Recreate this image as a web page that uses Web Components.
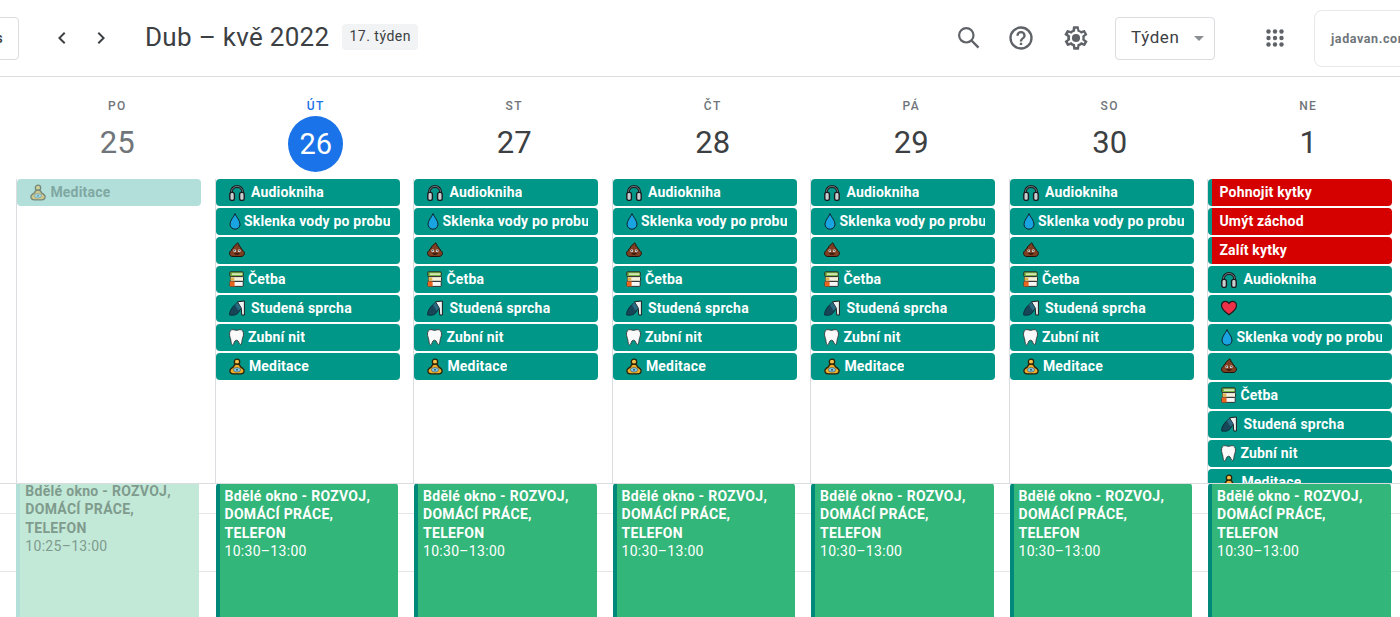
<!DOCTYPE html>
<html lang="cs">
<head>
<meta charset="utf-8">
<title>Kalendář</title>
<style>
  html, body { margin: 0; padding: 0; background: #fff; overflow: hidden; }
  body { font-family: Roboto, "Liberation Sans", sans-serif; }
</style>
</head>
<body>
<cal-app></cal-app>
<script>
const EMOJI = {
  headphones: `<path d="M2.4 11V8a5.6 5.6 0 0 1 11.2 0v3" fill="none" stroke="#1a1d20" stroke-width="3"/><path d="M2.4 10V8a5.6 5.6 0 0 1 11.2 0v2" fill="none" stroke="#7f8b90" stroke-width=".8"/><rect x=".8" y="8.4" width="4.6" height="8" rx="2" fill="#c9ced1" stroke="#1a1d20" stroke-width="1.4"/><rect x="10.6" y="8.4" width="4.6" height="8" rx="2" fill="#c9ced1" stroke="#1a1d20" stroke-width="1.4"/>`,
  drop: `<path d="M6 .6C4.8 4 1 7.4 1 11.2a5 5 0 0 0 10 0C11 7.4 7.2 4 6 .6z" fill="#19a3e0" stroke="#10242c" stroke-width="1"/>`,
  poop: `<path d="M8.8.8c1 1.1 1.3 2 1 3 1.3.3 2 1.2 1.9 2.4 1.1.4 1.7 1.2 1.7 2.2 1.2.5 2 1.6 2 2.9 0 2-1.500 3.200-3.500 3.200H3.900c-2 0-3.400-1.200-3.400-3.200 0-1.300.8-2.400 1.900-2.900 0-1 .7-1.900 1.800-2.300C4.300 4 6.600 3 8.800.8z" fill="#7e3f22" stroke="#241008" stroke-width="1"/><circle cx="5.800" cy="8.800" r="1.400" fill="#fff"/><circle cx="10.200" cy="8.800" r="1.400" fill="#fff"/><circle cx="5.800" cy="8.800" r=".7" fill="#222"/><circle cx="10.200" cy="8.800" r=".7" fill="#222"/><path d="M5 11.300h6c-.7 1.800-5.300 1.800-6 0z" fill="#241008"/>`,
  books: `<rect x=".8" y=".8" width="13.4" height="4.8" rx=".8" fill="#7cb342" stroke="#222" stroke-width=".9"/><rect x="3" y="2.3" width="10.5" height="1.6" fill="#dcedc8"/><rect x="1.5" y="5.6" width="13" height="4.8" rx=".8" fill="#f5f1dc" stroke="#222" stroke-width=".9"/><rect x="1.5" y="6.5" width="3.8" height="3" fill="#e0b24a"/><rect x=".8" y="10.4" width="13.4" height="5" rx=".8" fill="#f7f7f7" stroke="#222" stroke-width=".9"/><rect x=".8" y="10.4" width="4.8" height="5" fill="#e8651f"/>`,
  shower: `<path d="M.5 14.800c0-4 2.400-7.300 5.500-10.300l3-2.500 3.200 6-2.700 4.500c-1.500 2-3.500 2.700-5.500 2.700H2c-1 0-1.500-.1-1.500-.4z" fill="#174659" stroke="#0c2530" stroke-width=".8"/><path d="M8.500 1.800 15.400 1v14h-2.600L12.200 8z" fill="#eef1f2" stroke="#1c1c1c" stroke-width="1"/><path d="M8.500 2.200 12.200 8l-2.700 2.800L6 5z" fill="#2a6a80"/>`,
  tooth: `<path d="M4 .6c1.500 0 2.500.8 3.500.8s2-.8 3.500-.8c2.300 0 3.500 1.900 3.500 4.400 0 2.500-1 3.800-1.300 5.600-.3 2-.5 5-1.900 5-1.500 0-1.100-4.400-3.800-4.400S5.200 16 3.700 16c-1.400 0-1.600-3-1.900-5C1.500 9 .5 7.500.5 5 .5 2.500 1.700.6 4 .6z" fill="#fafafa" stroke="#3a3a3a" stroke-width=".9"/>`,
  meditate: `<circle cx="8" cy="3.800" r="2.700" fill="#f4c04a" stroke="#2b2208" stroke-width="1.300"/><path d="M8 6.200c-2.300 0-3.200 1.200-3.500 2.600C2.700 9.700.9 11 .9 12.800c0 1.800 1.500 3 3.400 3h7.400c1.900 0 3.400-1.200 3.400-3 0-1.800-1.800-3.100-3.600-4-.3-1.400-1.200-2.600-3.500-2.600z" fill="#f0ae2c" stroke="#2b2208" stroke-width="1.300"/><ellipse cx="8" cy="11.800" rx="3.600" ry="2.300" fill="#7fc8ec" stroke="#4b4a2a" stroke-width=".6"/><circle cx="8" cy="11.800" r="1" fill="#2c5a78"/>`,
  heart: `<path d="M8 14.800C3.500 11.600.5 9 .5 5.500.5 3 2.400 1.300 4.500 1.300c1.500 0 2.700.8 3.500 2 .8-1.200 2-2 3.500-2 2.100 0 4 1.700 4 4.200 0 3.500-3 6.100-7.500 9.300z" fill="#ee3048" stroke="#1c1c1c" stroke-width="1.200"/>`
};

class CalEmoji extends HTMLElement {
  connectedCallback() {
    const w = this.getAttribute("w") || 16;
    this.attachShadow({ mode: "open" }).innerHTML = /*html*/ `
      <style>:host{display:inline-flex;flex:none} svg{display:block}</style>
      <svg width="${w}" height="17" viewBox="0 0 ${w} 17">${EMOJI[this.getAttribute("name")]}</svg>`;
  }
}
customElements.define("cal-emoji", CalEmoji);

class CalChip extends HTMLElement {
  connectedCallback() {
    const emoji = this.getAttribute("emoji");
    const w = this.getAttribute("w") || 16;
    this.attachShadow({ mode: "open" }).innerHTML = /*html*/ `
      <style>${CalChip.styles}</style>
      ${emoji ? `<cal-emoji name="${emoji}" w="${w}"></cal-emoji>` : ""}
      <span class="txt"><slot></slot></span>`;
  }
  static get styles() {
    return /*css*/ `
      :host{
        display:flex;align-items:center;gap:5px;box-sizing:border-box;
        width:184px;height:27px;padding:0 10px 0 13px;border-radius:4px;
        background:#009688;color:#fff;font:700 14px/27px Roboto,sans-serif;letter-spacing:.2px;
        white-space:nowrap;overflow:hidden;flex:none;
      }
      .txt{overflow:hidden;position:relative;top:-.5px}
      :host([red]){
        background:linear-gradient(90deg,#009688 4px,#d50000 4px);
        padding-left:11px;
      }
      :host([faded]){background:#b3dfda;color:#7fa8a2}
      :host([faded]) cal-emoji{opacity:.45}
    `;
  }
}
customElements.define("cal-chip", CalChip);

class CalBlock extends HTMLElement {
  connectedCallback() {
    this.attachShadow({ mode: "open" }).innerHTML = /*html*/ `
      <style>${CalBlock.styles}</style>
      <div class="title"><slot></slot></div>
      <div class="time">${this.getAttribute("time")}</div>`;
  }
  static get styles() {
    return /*css*/ `
      :host{
        display:block;box-sizing:border-box;width:182.5px;height:300px;margin:-1px 0 0 1px;
        padding:4px 12px 0 5px;border-left:4px solid #00897b;border-radius:4px;
        background:#33b679;color:#fff;font:14px/18.3px Roboto,sans-serif;letter-spacing:.3px;
        position:relative;
      }
      .title{font-weight:700}
      :host([faded]){
        width:183px;margin-top:-6px;margin-left:.3px;
        background:#c2e8d7;border-left-color:#b2dfd8;color:#7f9b8d;
      }
    `;
  }
}
customElements.define("cal-block", CalBlock);

class CalDayHead extends HTMLElement {
  connectedCallback() {
    this.attachShadow({ mode: "open" }).innerHTML = /*html*/ `
      <style>${CalDayHead.styles}</style>
      <div class="label">${this.getAttribute("label")}</div>
      <div class="num">${this.getAttribute("num")}</div>`;
  }
  static get styles() {
    return /*css*/ `
      :host{
        display:flex;flex-direction:column;align-items:center;box-sizing:border-box;
        height:102px;padding:21px 0 0 4px;color:#3c4043;
      }
      .label{font:500 12px/16px Roboto,sans-serif;letter-spacing:1.4px;color:#70757a;height:18px}
      .num{
        width:55px;height:56px;border-radius:50%;text-align:center;
        font:400 31px/54px Roboto,sans-serif;
      }
      :host([past]) .num{color:#70757a}
      :host([today]) .label{color:#1a73e8}
      :host([today]) .num{background:#1a73e8;color:#fff;font-size:29px;line-height:56px}
    `;
  }
}
customElements.define("cal-day-head", CalDayHead);

class CalTopbar extends HTMLElement {
  connectedCallback() {
    this.attachShadow({ mode: "open" }).innerHTML = /*html*/ `
      <style>${CalTopbar.styles}</style>
      <div class="today">Dnes</div>
      <svg class="chev" width="24" height="24" viewBox="0 0 24 24"><path d="M15.4 7.4 14 6l-6 6 6 6 1.4-1.4L10.800 12z" fill="#3c4043"/></svg>
      <svg class="chev next" width="24" height="24" viewBox="0 0 24 24"><path d="M8.600 7.400 10 6l6 6-6 6-1.400-1.400L13.200 12z" fill="#3c4043"/></svg>
      <div class="title">Dub – kvě 2022</div>
      <div class="week">17. týden</div>
      <div class="grow"></div>
      <svg class="ic" width="26" height="26" viewBox="0 0 26 26" fill="none" stroke="#5f6368"><circle cx="10.300" cy="10.300" r="7.200" stroke-width="2.200"/><path d="M15.500 15.500 22.500 22.700" stroke-width="2.400"/></svg>
      <svg class="ic help" width="28" height="28" viewBox="0 0 24 24"><path d="M11 18h2v-2h-2zm1-16a10 10 0 1 0 0 20 10 10 0 0 0 0-20zm0 18a8 8 0 1 1 0-16 8 8 0 0 1 0 16zm0-14a4 4 0 0 0-4 4h2a2 2 0 1 1 4 0c0 2-3 1.750-3 5h2c0-2.250 3-2.500 3-5a4 4 0 0 0-4-4z" fill="#5f6368"/></svg>
      <svg class="ic gear" width="28" height="28" viewBox="0 0 24 24"><path d="M19.400 13c0-.3.100-.6.100-1s0-.7-.1-1l2.100-1.600c.2-.2.200-.4.100-.6l-2-3.500c-.1-.2-.4-.3-.6-.2l-2.500 1c-.5-.4-1.100-.7-1.700-1l-.4-2.600c0-.3-.2-.5-.5-.5h-4c-.3 0-.5.200-.5.400l-.4 2.700c-.6.200-1.200.6-1.700 1l-2.500-1c-.2-.1-.5 0-.6.200l-2 3.500c-.1.200-.1.500.1.600L4.600 11c0 .3-.1.600-.1 1s0 .7.100 1l-2.100 1.600c-.2.200-.2.400-.1.600l2 3.500c.1.200.4.300.6.200l2.500-1c.5.400 1.100.7 1.700 1l.4 2.600c0 .3.200.5.500.5h4c.3 0 .5-.2.500-.4l.4-2.700c.6-.2 1.200-.6 1.700-1l2.500 1c.2.100.5 0 .6-.2l2-3.500c.1-.2.100-.5-.1-.6zM17.400 11.300c.1.300.1.500.1.700s0 .5-.1.700l-.1 1.100.9.700 1 .8-.6 1.100-1.200-.5-1-.4-.9.700c-.4.300-.8.500-1.200.7l-1 .4-.2 1.100-.2 1.300h-1.400l-.2-1.300-.2-1.100-1-.4c-.4-.2-.8-.4-1.200-.7l-.9-.7-1 .4-1.200.5-.7-1.200 1-.8.900-.7-.1-1.100c-.1-.3-.1-.5-.1-.7s0-.5.100-.7l.1-1.100-.9-.7-1-.8.700-1.200 1.200.5 1 .4.900-.7c.4-.3.800-.5 1.200-.7l1-.4.200-1.100.2-1.300h1.400l.2 1.300.2 1.100 1 .4c.4.200.8.400 1.200.7l.9.700 1-.4 1.200-.5.700 1.200-1 .8-.9.700zM12 8.500a3.500 3.500 0 1 0 0 7 3.500 3.500 0 0 0 0-7z" fill="#5f6368"/></svg>
      <div class="view"><span class="vt">Týden</span><span class="caret"></span></div>
      <svg class="apps" width="24" height="24" viewBox="0 0 24 24" fill="#5f6368">
        <circle cx="5.500" cy="5.500" r="2.200"/><circle cx="12" cy="5.500" r="2.200"/><circle cx="18.500" cy="5.500" r="2.200"/>
        <circle cx="5.500" cy="12" r="2.200"/><circle cx="12" cy="12" r="2.200"/><circle cx="18.500" cy="12" r="2.200"/>
        <circle cx="5.500" cy="18.500" r="2.200"/><circle cx="12" cy="18.500" r="2.200"/><circle cx="18.500" cy="18.500" r="2.200"/>
      </svg>
      <div class="acct">jadavan.com</div>`;
  }
  static get styles() {
    return /*css*/ `
      :host{
        display:flex;align-items:center;box-sizing:border-box;height:77px;
        border-bottom:1px solid #dadce0;color:#3c4043;white-space:nowrap;
        font-family:Roboto,sans-serif;
      }
      svg{flex:none}
      .today{
        flex:none;box-sizing:border-box;width:80px;height:43px;margin-left:-61px;
        border:1px solid #dadce0;border-radius:4px;
        font:500 14px/41px Roboto,sans-serif;text-align:center;padding-left:16px;
      }
      .chev{margin-left:31px}
      .next{margin-left:15px}
      .title{margin:-2px 0 0 32px;font:400 26px/32px Roboto,sans-serif;letter-spacing:.3px;color:#3c4043}
      .week{
        margin:-2px 0 0 13px;height:26px;padding:0 7px;border-radius:4px;background:#f1f3f4;
        font:400 14px/25px Roboto,sans-serif;letter-spacing:.5px;
      }
      .grow{flex:1}
      .help{margin-left:25px}
      .gear{margin-left:27px}
      .view{
        flex:none;display:flex;align-items:center;box-sizing:border-box;width:100px;height:43px;
        margin-left:25px;padding-left:15px;border:1px solid #dadce0;border-radius:4px;
        font:400 17px/41px Roboto,sans-serif;letter-spacing:.6px;
      }
      .vt{position:relative;top:-1px}
      .caret{
        margin-left:15px;border:5px solid transparent;border-top-color:#8b8f94;border-bottom-width:0;
      }
      .apps{margin-left:48px}
      .acct{
        flex:none;box-sizing:border-box;width:120px;height:57px;margin:0 -34px 0 27px;
        padding-left:16px;border:1px solid #e6e8ea;border-radius:8px;
        font:700 12.5px/56px Roboto,sans-serif;letter-spacing:.6px;color:#70757a;
      }
    `;
  }
}
customElements.define("cal-topbar", CalTopbar);

const HABITS = [
  ["headphones", "Audiokniha", 16, 6],
  ["drop", "Sklenka vody po probu", 12, 3],
  ["poop", "", 16, 0],
  ["books", "Četba", 15, 4],
  ["shower", "Studená sprcha", 16, 6],
  ["tooth", "Zubní nit", 15, 4],
  ["meditate", "Meditace", 16, 4]
];

const chipHtml = ([emoji, text, w, gap]) =>
  `<cal-chip emoji="${emoji}" w="${w}" style="gap:${gap}px">${text}</cal-chip>`;

class CalDayBody extends HTMLElement {
  connectedCallback() {
    const kind = this.getAttribute("kind");
    let chips;
    if (kind === "past") {
      chips = `<cal-chip faded emoji="meditate" style="gap:4px">Meditace</cal-chip>`;
    } else if (kind === "sunday") {
      const list = HABITS.map(chipHtml);
      list.splice(1, 0, `<cal-chip emoji="heart"></cal-chip>`);
      chips = ["Pohnojit kytky", "Umýt záchod", "Zalít kytky"]
        .map((t) => `<cal-chip red>${t}</cal-chip>`)
        .concat(list)
        .join("");
    } else {
      chips = HABITS.map(chipHtml).join("");
    }
    this.attachShadow({ mode: "open" }).innerHTML = /*html*/ `
      <style>
        :host{display:flex;flex-direction:column;gap:2px;box-sizing:border-box;height:304px;
          padding-left:.4px;border-left:1px solid #dadce0;overflow:hidden}
      </style>
      ${chips}`;
  }
}
customElements.define("cal-day-body", CalDayBody);

class CalApp extends HTMLElement {
  connectedCallback() {
    const days = [
      ["PO", "25", "past"], ["ÚT", "26", "today"], ["ST", "27", ""], ["ČT", "28", ""],
      ["PÁ", "29", ""], ["SO", "30", ""], ["NE", "1", "sunday"]
    ];
    const title = "Bdělé okno - ROZVOJ, DOMÁCÍ PRÁCE, TELEFON";
    this.attachShadow({ mode: "open" }).innerHTML = /*html*/ `
      <style>${CalApp.styles}</style>
      <cal-topbar></cal-topbar>
      <div class="grid heads">
        ${days.map(([l, n, k]) => `<cal-day-head label="${l}" num="${n}" ${k === "past" || k === "today" ? k : ""}></cal-day-head>`).join("")}
      </div>
      <div class="grid bodies">
        ${days.map((d) => `<cal-day-body kind="${d[2]}"></cal-day-body>`).join("")}
      </div>
      <div class="grid timed">
        ${days.map((d) => d[2] === "past"
          ? `<cal-block faded time="10:25–13:00">${title}</cal-block>`
          : `<cal-block time="10:30–13:00">${title}</cal-block>`).join("")}
      </div>`;
  }
  static get styles() {
    return /*css*/ `
      :host{display:flex;flex-direction:column;width:1400px;height:617px;overflow:hidden;background:#fff}
      .grid{display:grid;grid-template-columns:repeat(7,198.5px);padding-left:16px;flex:none}
      .bodies{border-bottom:1px solid #dadce0;position:relative}
      .timed{
        flex:1;min-height:0;overflow:hidden;
        background:linear-gradient(#e6e7e9,#e6e7e9) 0 29px/100% 1px no-repeat,
                   linear-gradient(#e6e7e9,#e6e7e9) 0 87px/100% 1px no-repeat;
      }
    `;
  }
}
customElements.define("cal-app", CalApp);
</script>
</body>
</html>
